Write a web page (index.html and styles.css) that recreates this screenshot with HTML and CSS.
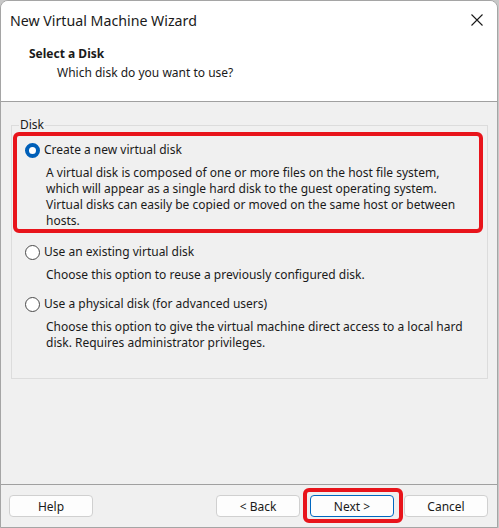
FILE: index.html
```html
<!DOCTYPE html>
<html lang="en">
  <head>
    <meta charset="UTF-8" />
    <title>New Virtual Machine Wizard</title>
    <link rel="stylesheet" href="styles.css">
  </head>
  <body>
    <div class="window">
      <div class="titlebar">
        <span class="title">New Virtual Machine Wizard</span>
        <span class="close" aria-label="Close">
          <svg width="12" height="12" viewBox="0 0 12 12">
            <path d="M0.5 0.5 L11.5 11.5 M11.5 0.5 L0.5 11.5" stroke="#1a1a1a" stroke-width="1.1" fill="none" />
          </svg>
        </span>
      </div>

      <div class="header">
        <h1>Select a Disk</h1>
        <p>Which disk do you want to use?</p>
      </div>

      <main class="content">
        <fieldset class="group">
          <legend>Disk</legend>

          <div class="highlight">
            <div class="option">
              <label class="option-label"><span class="radio checked"></span>Create a new virtual disk</label>
              <p class="option-desc">A virtual disk is composed of one or more files on the host file system,
                which will appear as a single hard disk to the guest operating system.
                Virtual disks can easily be copied or moved on the same host or between hosts.</p>
            </div>
          </div>

          <div class="option">
            <label class="option-label"><span class="radio"></span>Use an existing virtual disk</label>
            <p class="option-desc">Choose this option to reuse a previously configured disk.</p>
          </div>

          <div class="option">
            <label class="option-label"><span class="radio"></span>Use a physical disk (for advanced users)</label>
            <p class="option-desc">Choose this option to give the virtual machine direct access to a local hard
              disk. Requires administrator privileges.</p>
          </div>
        </fieldset>
      </main>

      <footer class="buttons">
        <button class="btn">Help</button>
        <span class="spacer"></span>
        <button class="btn">&lt; Back</button>
        <span class="next-mark"><button class="btn primary">Next &gt;</button></span>
        <button class="btn">Cancel</button>
      </footer>
    </div>
  </body>
</html>
```

FILE: styles.css
```css
* {
  margin: 0;
  padding: 0;
  box-sizing: border-box;
  font-family: "Segoe UI", "Noto Sans", "Open Sans", sans-serif;
}
body {
  background: #c8c8c8;
  width: 499px;
  height: 528px;
  overflow: hidden;
  color: #1a1a1a;
  font-size: 12px;
}

.window {
  width: 498px;
  height: 528px;
  background: #f0f0f0;
  border: 1px solid #a5a5a5;
  border-radius: 8px 8px 0 0;
  overflow: hidden;
  display: flex;
  flex-direction: column;
}

/* Title bar */
.titlebar {
  background: #fff;
  height: 38px;
  display: flex;
  align-items: center;
  justify-content: space-between;
  padding: 0 14px 0 9px;
}
.title {
  font-size: 14.2px;
  color: #1a1a1a;
}
.close {
  display: flex;
  margin-top: -1px;
}

/* Header */
.header {
  background: #fff;
  height: 63px;
  padding: 7px 0 0 28px;
  border-bottom: 1px solid #a0a0a0;
}
.header h1 {
  font-size: 12px;
  font-weight: 700;
  line-height: 16px;
}
.header p {
  margin: 3px 0 0 28px;
  line-height: 16px;
}

/* Group box */
.content {
  flex-grow: 1;
  padding: 16px 9px 0 10px;
}
.group {
  border: 1px solid #dcdcdc;
  height: 261px;
  padding: 0;
}
.group legend {
  margin-left: 7px;
  padding: 0 1px;
  line-height: 14px;
}
.highlight {
  border: 4px solid #e8141b;
  border-radius: 6px;
  margin: 0 4px 0 1px;
  padding: 6px 0 0 8px;
}
.option {
  margin-top: 11px;
  padding-left: 13px;
}
.highlight .option {
  margin: 0;
  padding: 0;
}
.option + .option {
  margin-top: 13px;
}
.option-label {
  display: flex;
  align-items: center;
  line-height: 16px;
}
.option-desc {
  margin: 7px 0 0 21px;
  line-height: 16px;
  padding-right: 20px;
}

/* Radio buttons */
.radio {
  width: 15px;
  height: 15px;
  border: 1px solid #4a4a4a;
  border-radius: 50%;
  background: #fff;
  margin-right: 4px;
  flex-shrink: 0;
}
.radio.checked {
  border: 4px solid #005fb8;
}

/* Footer buttons */
.buttons {
  border-top: 1px solid #a0a0a0;
  height: 43px;
  display: flex;
  align-items: flex-start;
  padding: 10px 9px 0 8px;
  gap: 10px;
}
.spacer {
  flex-grow: 1;
}
.btn {
  width: 84px;
  height: 22px;
  background: #fdfdfd;
  border: 1px solid #d0d0d0;
  border-radius: 4px;
  font-size: 12px;
  color: #1a1a1a;
}
.btn.primary {
  border-color: #0067c0;
}
.next-mark {
  display: flex;
  margin: -7px -9px -6px -7px;
  padding: 3px 5px 2px 3px;
  border: 4px solid #e8141b;
  border-radius: 6px;
}
```
